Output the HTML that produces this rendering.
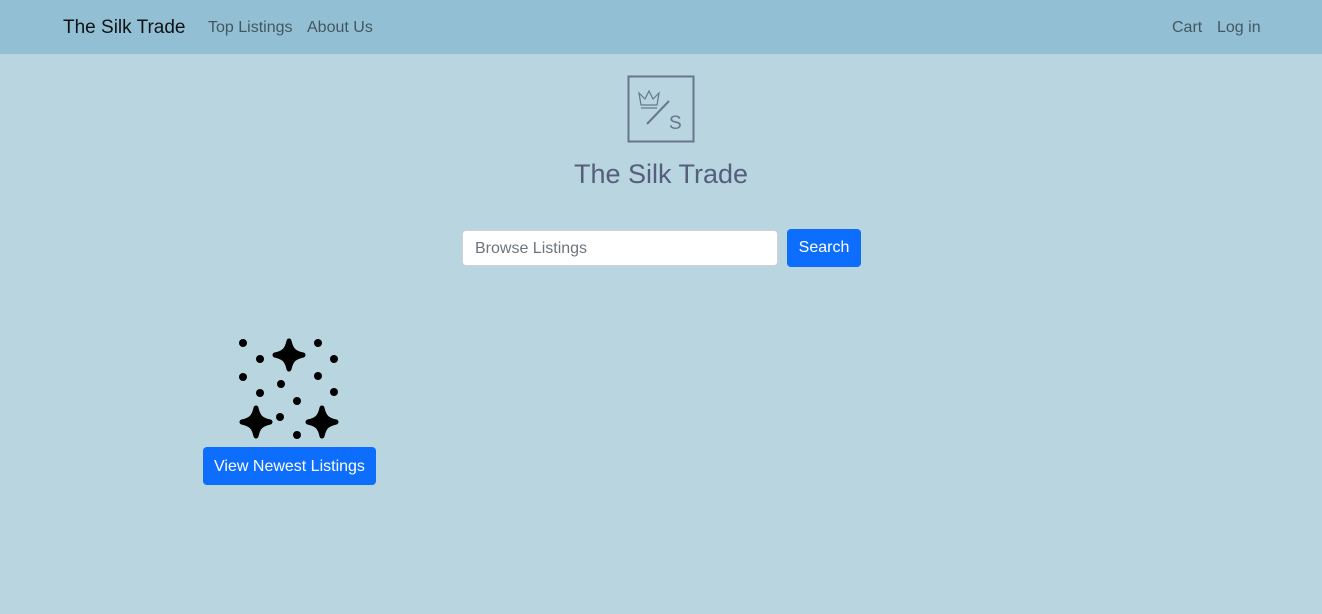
<!DOCTYPE html>
<html><head><style>
*{margin:0;padding:0;box-sizing:border-box}
body{width:1322px;height:614px;background:#b8d5e0;font-family:"Liberation Sans",sans-serif;position:relative;overflow:hidden}
.nav{position:absolute;left:0;top:0;width:1322px;height:54px;background:#92bfd3}
.nav span{position:absolute;top:1px;line-height:54px;color:rgba(0,0,0,.55);font-size:16px}
.brand{left:63px;font-size:19px!important;color:rgba(0,0,0,.9)!important}
.title{position:absolute;top:159px;left:0;width:1322px;text-align:center;font-size:27px;color:#555e7a}
.input{position:absolute;left:462px;top:230px;width:316px;height:36px;background:#fff;border:1px solid #ced4da;border-radius:4px;padding-left:12px;line-height:36px;color:#6c757d;font-size:16px}
.btn{position:absolute;background:#0d6efd;color:#fff;border-radius:4px;text-align:center;font-size:16px}
</style></head><body>
<div class="nav">
<span class="brand">The Silk Trade</span>
<span style="left:208px">Top Listings</span>
<span style="left:307px">About Us</span>
<span style="left:1172px">Cart</span>
<span style="left:1217px">Log in</span>
</div>
<svg style="position:absolute;left:627px;top:75px" width="68" height="68" viewBox="0 0 68 68">
<rect x="1.5" y="1.5" width="65" height="65" fill="none" stroke="#687690" stroke-width="2"/>
<line x1="20" y1="49" x2="42" y2="26" stroke="#687690" stroke-width="2"/>
<path d="M12 18 L14 30 L30 30 L32 18 L26 24 L22 16 L18 24 Z" fill="none" stroke="#687690" stroke-width="1.2"/>
<line x1="14" y1="33" x2="30" y2="33" stroke="#687690" stroke-width="1.2"/>
<text x="42" y="54" font-family="Liberation Sans" font-size="19" fill="#687690">S</text>
</svg>
<div class="title">The Silk Trade</div>
<div class="input">Browse Listings</div>
<div class="btn" style="left:787px;top:229px;width:74px;height:38px;line-height:38px">Search</div>
<svg style="position:absolute;left:0;top:0" width="400" height="450">
<defs><path id="st" d="M0,-14 C2,-5 5,-2 14,0 C5,2 2,5 0,14 C-2,5 -5,2 -14,0 C-5,-2 -2,-5 0,-14Z" stroke="#000" stroke-width="5" stroke-linejoin="round"/></defs>
<g fill="#000">
<circle cx="243" cy="343" r="4"/><circle cx="260" cy="359" r="4"/><circle cx="243" cy="377" r="4"/><circle cx="260" cy="393" r="4"/>
<circle cx="281" cy="384" r="4"/><circle cx="297" cy="401" r="4"/><circle cx="280" cy="417" r="4"/><circle cx="297" cy="435" r="4"/>
<circle cx="318" cy="343" r="4"/><circle cx="334" cy="359" r="4"/><circle cx="318" cy="376" r="4"/><circle cx="334" cy="392" r="4"/>
<use href="#st" x="289" y="355"/>
<use href="#st" x="256" y="422"/>
<use href="#st" x="322" y="422"/>
</g></svg>
<div class="btn" style="left:203px;top:447px;width:173px;height:38px;line-height:39px">View Newest Listings</div>
</body></html>
